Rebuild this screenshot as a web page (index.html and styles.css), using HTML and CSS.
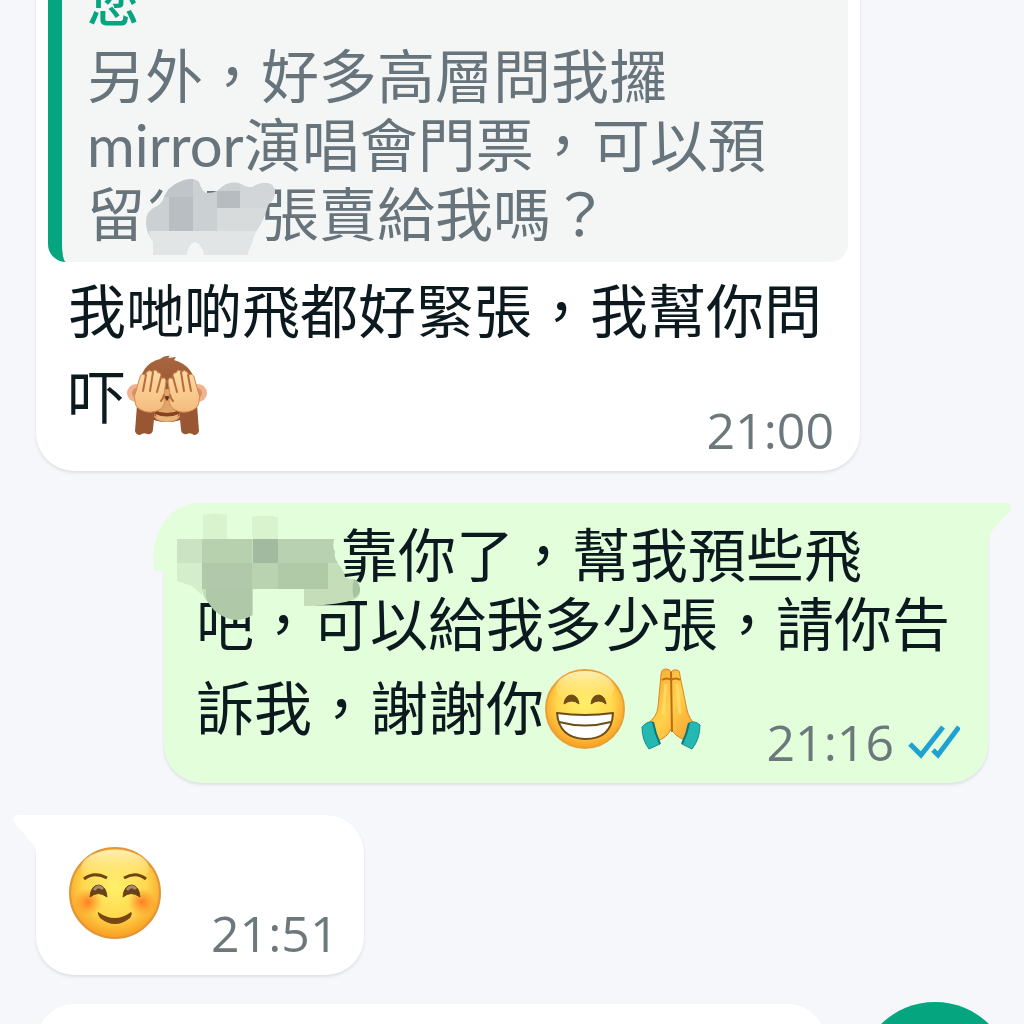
FILE: index.html
```html
<!DOCTYPE html>
<html lang="zh-Hant-HK">
<head>
<meta charset="utf-8">
<meta name="viewport" content="width=device-width, initial-scale=1">
<title>對話</title>
<link rel="stylesheet" href="styles.css">
</head>
<body>
<svg class="defs" aria-hidden="true">
  <defs>
    <radialGradient id="face" cx="50%" cy="42%" r="58%">
      <stop offset="0" stop-color="#fff06a"/><stop offset=".6" stop-color="#ffd94f"/><stop offset="1" stop-color="#f99c1f"/>
    </radialGradient>
    <linearGradient id="shine" x1="0" y1="0" x2="0" y2="1">
      <stop offset="0" stop-color="#fff3c0" stop-opacity=".9"/><stop offset="1" stop-color="#ffe36a" stop-opacity="0"/>
    </linearGradient>
    <radialGradient id="blush">
      <stop offset="0" stop-color="#ff6d1c" stop-opacity=".85"/><stop offset="1" stop-color="#ff7d1c" stop-opacity="0"/>
    </radialGradient>
    <linearGradient id="fur" x1="0" y1="0" x2="0" y2="1">
      <stop offset="0" stop-color="#a8673f"/><stop offset="1" stop-color="#8c4b2a"/>
    </linearGradient>
    <linearGradient id="paw" x1="0" y1="0" x2="0" y2="1">
      <stop offset="0" stop-color="#ffdca6"/><stop offset="1" stop-color="#f3bb7c"/>
    </linearGradient>
    <linearGradient id="palm" x1="0" y1="0" x2="1" y2="1">
      <stop offset="0" stop-color="#f6a12c"/><stop offset=".5" stop-color="#ffd24c"/><stop offset="1" stop-color="#f79a2a"/>
    </linearGradient>
  </defs>
</svg>

<main class="chat">
  <article class="bubble incoming">
    <blockquote class="quote">
      <p class="quote-name">您</p>
      <p class="quote-text">另外，好多高層問我攞mirror演唱會門票，可以預留<span class="masked masked-quote"><svg class="mask-quote" viewBox="140 170 136 90" aria-hidden="true">
        <path d="M150 201q6-4 10-12M206 192h14" fill="none" stroke="#68747c" stroke-width="4"/>
        <path d="M145 221Q145 210 154 206Q160 204 163 196Q167 186 176 182Q190 174 198 181Q201 191 206 192Q212 192 216 190Q228 178 240 183Q250 189 255 184Q272 178 274 190Q274 198 267 204Q264 218 254 232L246 254H204Q200 240 193 241Q188 242 185 254H152V240Q145 232 145 221z" fill="#cbd0d2"/>
        <path d="M168 188Q176 180 192 178V196H163Z" fill="#bfc5c8"/>
        <path d="M168 196H192V230H168z" fill="#b8bec1"/>
        <path d="M216 190H239V207H216z" fill="#b7bcc0"/>
        <path d="M239 183Q250 189 255 184Q272 178 274 190Q274 198 267 204L266 207H239z" fill="#d2d6d8"/>
        <path d="M216 207H266Q262 219 255 230H216z" fill="#d8dbdc"/>
        <path d="M148 230H255L246 254H204Q200 240 193 241Q188 242 185 254H152V240Q148 235 148 230z" fill="#e2e5e5"/>
      </svg></span>張賣給我嗎？</p>
    </blockquote>
    <p class="text">我哋啲飛都好緊張，我幫你問吓<svg class="emoji" viewBox="0 0 80 82" role="img" aria-label="掩眼猴子">
      <circle cx="9" cy="38" r="9" fill="#f1b38e"/><circle cx="71" cy="38" r="9" fill="#f1b38e"/>
      <circle cx="10" cy="38" r="5" fill="#dc8f70"/><circle cx="70" cy="38" r="5" fill="#dc8f70"/>
      <path d="M12 34Q13 9 33 4Q38 0 43 1L41 3L49 2L47 5Q68 11 69 34V44Q66 67 40 67Q14 67 12 44z" fill="url(#fur)"/>
      <path d="M24 52Q32 34 40 34Q48 34 56 52Q56 67 40 67Q24 67 24 52z" fill="#e0a66c"/>
      <path d="M27 55Q40 61 53 55L52 61Q40 66 28 61z" fill="#85431f"/>
      <path d="M28 59Q40 64 52 59L49 64Q40 68 31 64z" fill="#eab57c"/>
      <path d="M37 42q3-2 6 0l-3 4z" fill="#593323"/>
      <path d="M10 50L8 76Q9 80 13 80Q17 77 20 79Q26 80 26 74L28 54zM70 50L72 76Q71 80 67 80Q63 77 60 79Q54 80 54 74L52 54z" fill="#985632"/>
      <g id="paw-left">
        <path d="M8 46Q6 42 9 36L13 22Q14 18 18 20L20 17Q23 14 25 17Q29 13 31 18Q34 17 34 22L34 24Q38 21 39 26L37 40Q40 48 34 54Q24 60 14 55Q8 52 8 46z" fill="url(#paw)" stroke="#cf8850"/>
        <path d="M19 20L16 36M26 17L23 36M34 22L30 37M37 40Q36 44 34 46" fill="none" stroke="#b96c3b" stroke-width="2" stroke-linecap="round"/>
      </g>
      <use href="#paw-left" transform="matrix(-1 0 0 1 80 0)"/>
    </svg><span class="meta"><time datetime="21:00">21:00</time></span></p>
  </article>

  <article class="bubble outgoing">
    <svg class="tail tail-right" viewBox="0 0 54 40" aria-hidden="true"><path d="M0 0H48Q55 1 52 7Q50 11 45 15L34 28Q30 32 30 40H0z"/></svg>
    <p class="text"><span class="masked masked-name"></span>靠你了，幫我預些飛吧，可以給我多少張，請你告訴我，謝謝你<svg class="emoji" viewBox="0 0 80 82" role="img" aria-label="露齒笑">
      <circle cx="40" cy="41" r="39" fill="url(#face)" stroke="#e9a037" stroke-width="2"/>
      <ellipse cx="40" cy="20" rx="29" ry="17" fill="url(#shine)"/>
      <path d="M19 36Q20 27 27 27Q33 28 34 36Q27 30 19 36zM46 36Q47 27 54 27Q60 28 61 36Q54 30 46 36z" fill="#6f4d16" stroke="#6f4d16" stroke-linejoin="round"/>
      <path d="M12 45Q40 49 68 45Q67 71 40 71Q14 70 12 45z" fill="#fff" stroke="#6d4e16" stroke-width="2" stroke-linejoin="round"/>
      <path d="M14 54Q40 61 66 54" fill="none" stroke="#6d4e16" stroke-width="2"/>
    </svg><svg class="emoji" viewBox="0 0 80 82" role="img" aria-label="合十">
      <path d="M30 7Q30 1 35 1Q39 1 40 4Q42 1 46 2Q49 2 49 8L56 42Q58 51 65 57L54 72Q45 69 40 61Q36 70 26 73L16 56Q26 49 27 39z" fill="url(#palm)" stroke="#dc8520"/>
      <path d="M40 4L41 64M31 12q5-3 9 0q5-3 9 0" fill="none" stroke="#c06a18" stroke-width="2"/>
      <path d="M35 16L32 46M46 16L49 46" fill="none" stroke="#ffdf70" stroke-width="3" opacity=".7"/>
      <path d="M11 59Q16 53 22 54Q24 65 29 76L18 81Q11 72 11 59z" fill="#25b7b1" stroke="#158f92"/>
      <path d="M69 57Q64 52 58 55Q56 66 51 76L61 81Q69 71 69 57z" fill="#25b7b1" stroke="#158f92"/>
      <path d="M22 54Q24 65 29 76M58 55Q56 66 51 76" fill="none" stroke="#0d777c" stroke-width="2"/>
    </svg><span class="meta"><time datetime="21:16">21:16</time><svg class="ticks" viewBox="0 0 52 36" role="img" aria-label="已讀"><path d="M2 20L13 31L35 3M25 26L30 31L51 3" fill="none" stroke="#1fa2d2" stroke-width="5"/></svg></span></p>
    <svg class="mask-name" viewBox="150 500 220 130" aria-hidden="true">
      <path d="M154 570Q150 536 168 516Q178 504 196 502H210V570z" fill="#e3fedb"/>
      <path d="M203 514q12-3 24 0v24h-24zM252 516q14-3 26 0v22h-26z" fill="#d8f3ce"/>
      <path d="M177 538h157q-2 10 1 12q-2 6 3 13q7 8 7 13l5 2h4q3 4 5 8q3 8-4 12q-14 6-51 7v-17h-51v26q-10 6-22 3q-14-4-20-14q-8-4-9-15l-10-9l-15-5z" fill="#c5deb9"/>
      <path d="M177 538h25v24h-25z" fill="#cbe3c2"/>
      <path d="M177 562h25v32l-10-9l-15-5z" fill="#d4edcb"/>
      <path d="M202 538h50v24h-50z" fill="#b7d0ae"/>
      <path d="M253 538h25v24h-25z" fill="#a2baa0"/>
      <path d="M278 538h56q-2 10 1 12q-2 6 3 12h-60z" fill="#b8d1b0"/>
      <path d="M202 562h50v26h-50z" fill="#b1c9aa"/>
      <path d="M252 562h26v26h-26z" fill="#b9d3b0"/>
      <path d="M278 562h50v26h-50z" fill="#b0caa8"/>
      <path d="M206 588h46v26q-10 7-22 4q-14-4-20-14q-5-5-4-16z" fill="#afc8a8"/>
      <path d="M354 578q5 2 6 9q1 6-6 10q-3-8 0-19z" fill="#a9c3a2"/>
    </svg>
  </article>

  <article class="bubble incoming single">
    <svg class="tail tail-left" viewBox="0 0 54 40" aria-hidden="true"><path d="M54 0H6Q-1 1 2 7Q4 11 9 15L20 28Q24 32 24 40H54z"/></svg>
    <svg class="emoji-large" viewBox="0 0 92 92" role="img" aria-label="微笑">
      <circle cx="46" cy="46" r="45" fill="url(#face)" stroke="#e2963a" stroke-width="2"/>
      <ellipse cx="46" cy="21" rx="34" ry="18" fill="url(#shine)"/>
      <circle cx="19" cy="55" r="14" fill="url(#blush)"/><circle cx="73" cy="55" r="14" fill="url(#blush)"/>
      <path d="M15 32Q25 24 38 31M55 31Q67 24 77 32" fill="none" stroke="#704511" stroke-width="3"/>
      <path d="M21 50Q22 38 30 38Q37 39 38 50Q29 43 21 50zM54 50Q55 38 63 38Q70 39 71 50Q62 43 54 50z" fill="#674317" stroke="#674317" stroke-linejoin="round"/>
      <path d="M25 43Q29 37 34 42M58 43Q62 37 67 42" fill="none" stroke="#aa8872" stroke-width="3"/>
      <path d="M29 65Q46 77 62 65Q64 66 61 71Q46 83 31 71Q28 66 29 65z" fill="#764711"/>
    </svg>
    <span class="meta"><time datetime="21:51">21:51</time></span>
  </article>

  <article class="bubble incoming next"></article>
</main>
<button class="fab" type="button" aria-label="捲動至最新訊息"></button>
</body>
</html>
```
FILE: styles.css
```css
* {
  box-sizing: border-box;
}

body {
  margin: 0;
  height: 100vh;
  overflow: hidden;
  position: relative;
  background: #f5f7fa;
  color: #0c1a1f;
  font-family: "Noto Sans CJK TC", "Noto Sans CJK SC", sans-serif;
  font-size: 58px;
  line-height: 69px;
}

p,
blockquote {
  margin: 0;
}

.defs {
  position: absolute;
  width: 0;
  height: 0;
}

/* The thread is scrolled so that the first bubble starts above the window. */
.chat {
  display: flex;
  flex-direction: column;
  align-items: flex-start;
  gap: 32px;
  margin-top: -64px;
  padding: 0 36px;
}

.bubble {
  position: relative;
  max-width: calc(100% - 128px);
  border-radius: 38px;
  box-shadow: 0 2px 3px #dde1e4;
}

.incoming {
  padding: 12px;
  background: #fff;
}

.outgoing {
  align-self: flex-end;
  padding: 15px 12px 12px;
  background: #e3fedb;
  border-top-right-radius: 0;
}

.quote {
  padding: 20px 28px 14px 25px;
  border-left: 14px solid #04a57f;
  border-radius: 18px;
  background: #f4f6f6;
  color: #68747c;
}

.quote-name {
  margin-bottom: 9px;
  color: #04a57f;
  font-size: 52px;
  font-weight: 500;
  line-height: 64px;
}

.quote-text {
  font-family: Lato, "Noto Sans CJK TC", "Noto Sans CJK SC", sans-serif;
}

.text {
  display: flow-root;
  padding: 0 20px 21px;
}

.quote + .text {
  padding-top: 12px;
}

.emoji {
  width: 80px;
  height: 82px;
  margin: 12px 3px 0;
  vertical-align: -18px;
}

.outgoing .emoji {
  vertical-align: -20px;
}

.emoji:first-of-type {
  margin-left: 1px;
}

.meta {
  display: flex;
  align-items: center;
  gap: 14px;
  color: #6c787b;
  font-family: "Open Sans", sans-serif;
  font-size: 50px;
  line-height: 60px;
}

.text .meta {
  float: right;
  margin: 57px -6px -22px 0;
}

.outgoing .meta {
  margin-top: 56px;
  margin-right: -4px;
}

.ticks {
  width: 52px;
  height: 36px;
}

.masked {
  display: inline-block;
  position: relative;
  height: 58px;
  vertical-align: top;
}

.masked-quote {
  width: 116px;
}

.masked-name {
  width: 144px;
}

.mask-quote {
  position: absolute;
  left: -4px;
  top: -8px;
  width: 136px;
  height: 90px;
}

.mask-name {
  position: absolute;
  left: -14px;
  top: -2px;
  width: 220px;
  height: 130px;
}

.tail {
  position: absolute;
  top: 0;
  width: 54px;
  height: 40px;
}

.tail-left {
  left: -24px;
  fill: #fff;
}

.tail-right {
  right: -24px;
  fill: #e3fedb;
}

.single {
  display: flex;
  align-items: flex-end;
  gap: 50px;
  padding: 32px 25px 12px 33px;
  border-top-left-radius: 0;
}

.emoji-large {
  width: 92px;
  height: 92px;
  margin-bottom: 24px;
}

.next {
  width: 83%;
  min-height: 160px;
  margin-top: -3px;
}

.fab {
  position: absolute;
  right: 12px;
  bottom: -132px;
  width: 154px;
  height: 154px;
  border: 0;
  border-radius: 50%;
  background: #04a57f;
}
```
